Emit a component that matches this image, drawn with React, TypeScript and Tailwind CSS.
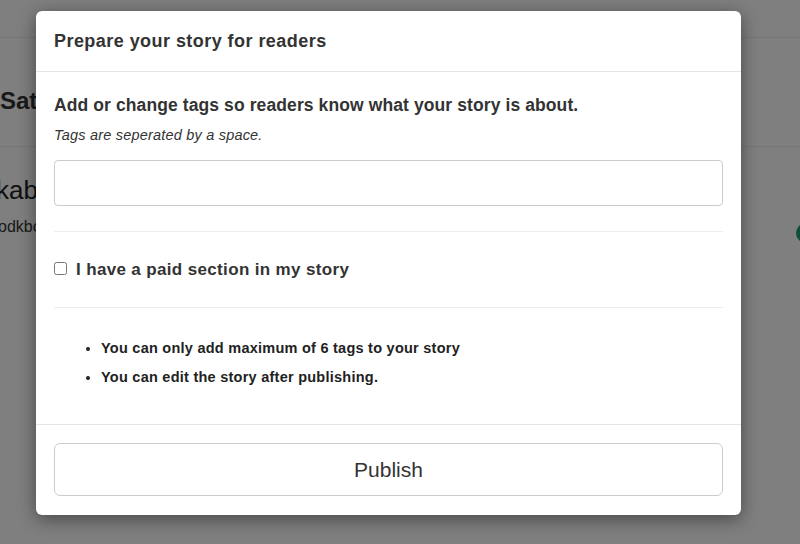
import React from "react";

const App = () => {
  return (
    <div className="relative w-[800px] h-[544px] overflow-hidden bg-white font-['Liberation_Sans',Arial,sans-serif] text-[#333]">
      {/* Page behind the modal */}
      <div className="h-[38px] border-b border-[#ececec]" />
      <div className="h-[109px] border-b border-[#ececec] flex items-center">
        <h2 className="text-[24px] font-bold text-[#333] mt-[18px]">Satisfied users</h2>
      </div>
      <div className="flex items-start justify-between pt-[28px]">
        <div>
          <p className="text-[26px] leading-[30px] text-[#222] -ml-[17px]">xkabcdk</p>
          <p className="text-[16px] leading-[20px] mt-[12px] text-[#333] -ml-[2px]">odkbcdkb</p>
        </div>
        <div className="w-[20px] h-[20px] rounded-full bg-[#1f9d6f] mt-[48px] -mr-[16px]" />
      </div>

      {/* Overlay */}
      <div className="absolute inset-0 bg-black/50 pt-[11px] pl-[36px]">
        <div className="w-[705px] bg-white rounded-[6px] shadow-[0_4px_18px_rgba(0,0,0,0.45)] flex flex-col">
          {/* Header */}
          <div className="h-[61px] flex items-center px-[18px] border-b border-[#e5e5e5]">
            <h4 className="text-[18px] font-bold text-[#333] tracking-[0.45px] mt-[1px]">
              Prepare your story for readers
            </h4>
          </div>

          {/* Body */}
          <div className="px-[18px] pt-[22px] pb-[37px]">
            <h5 className="text-[17.5px] leading-[22px] font-bold text-[#333] tracking-[0.1px]">
              Add or change tags so readers know what your story is about.
            </h5>
            <p className="italic text-[14.5px] leading-[20px] mt-[9px] text-[#333] tracking-[0.2px]">
              Tags are seperated by a space.
            </p>
            <input
              type="text"
              className="mt-[15px] w-full h-[46px] border border-[#cccccc] rounded-[4px] px-3 outline-none"
            />
            <div className="mt-[25px] border-t border-[#eeeeee]" />
            <label className="mt-[26px] flex items-center gap-[9px] h-[24px]">
              <input type="checkbox" className="w-[13px] h-[13px] -mt-[4px]" />
              <span className="text-[17px] font-bold text-[#333] tracking-[0.35px]">
                I have a paid section in my story
              </span>
            </label>
            <div className="mt-[25px] border-t border-[#eeeeee]" />
            <ul className="mt-[30px] pl-[47px] list-disc text-[14.5px] font-bold leading-[20px] text-[#222] tracking-[0.25px]">
              <li>You can only add maximum of 6 tags to your story</li>
              <li className="mt-[9px]">You can edit the story after publishing.</li>
            </ul>
          </div>

          {/* Footer */}
          <div className="border-t border-[#e5e5e5] px-[18px] pt-[18px] pb-[19px]">
            <button className="w-full h-[53px] border border-[#cccccc] rounded-[6px] bg-white text-[21px] text-[#333]">
              Publish
            </button>
          </div>
        </div>
      </div>
    </div>
  );
};

export default App;
